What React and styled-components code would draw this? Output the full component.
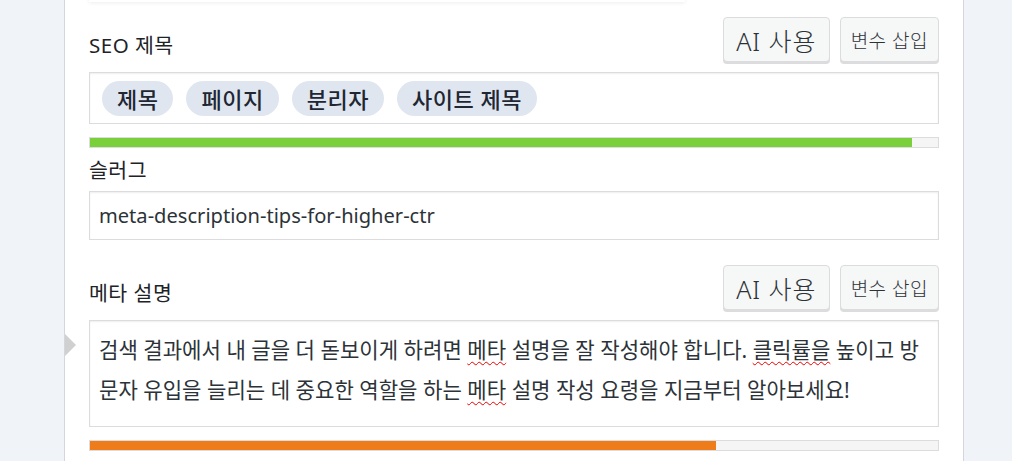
import React from 'react';
import styled, { createGlobalStyle } from 'styled-components';

const GlobalStyle = createGlobalStyle`
    html, body {
        margin: 0;
        padding: 0;
        background: #f0f3f8;
        font-family: "Noto Sans", "Noto Sans CJK KR", sans-serif;
        color: #2c3338;
    }
`;

const Panel = styled.div`
    width: 850px;
    min-height: 461px;
    margin-left: 64px;
    padding: 0 24px;
    background: #fff;
    border-left: 1px solid #d4d6da;
    border-right: 1px solid #d4d6da;
    overflow: hidden;
`;

const PrevCard = styled.div`
    width: 596px;
    height: 20px;
    margin-top: -18px;
    background: #fff;
    box-shadow: 0 1px 4px rgba(0, 0, 0, 0.07);
`;

const Field = styled.div`
    margin-top: ${props => props.gap}px;
    position: relative;
`;

const Header = styled.div`
    display: flex;
    align-items: flex-end;
    justify-content: space-between;
`;

const Label = styled.label`
    display: block;
    font-size: 20.5px;
    letter-spacing: 0.5px;
    line-height: 30px;
    color: #1d2327;
    margin-bottom: ${props => props.lift || 0}px;
`;

const Buttons = styled.div`
    display: flex;
    gap: 10px;
`;

const Button = styled.button`
    height: 45px;
    margin-bottom: 2px;
    padding: 0 ${props => (props.big ? 12 : 10)}px;
    font-family: "Noto Sans", "Noto Sans CJK KR", sans-serif;
    font-size: ${props => (props.big ? 25 : 19)}px;
    font-weight: 300;
    letter-spacing: ${props => (props.big ? 1 : 0.5)}px;
    color: #2c3338;
    background: #f6f7f7;
    border: 1px solid #dcdcde;
    border-radius: 4px;
    box-shadow: 0 2px 0 #dcdcde;
    cursor: pointer;
`;

const Box = styled.div`
    box-sizing: border-box;
    margin-top: 8px;
    border: 1px solid #dcdcde;
    box-shadow: inset 0 1px 2px rgba(0, 0, 0, 0.07);
    background: #fff;
`;

const ChipBox = styled(Box)`
    height: 52px;
    display: flex;
    align-items: center;
    gap: 13px;
    padding: 0 12px;
`;

const Chip = styled.span`
    height: 35px;
    display: flex;
    align-items: center;
    padding: 0 15px;
    border-radius: 18px;
    background: #e0e6ef;
    color: #1e2733;
    font-size: 22px;
    letter-spacing: 0.5px;
    font-weight: 500;
`;

const SlugInput = styled(Box)`
    margin-top: 6px;
    height: 49px;
    display: flex;
    align-items: center;
    padding: 0 9px;
    font-size: 20.1px;
`;

const TextArea = styled(Box)`
    height: 107px;
    padding: 9px 9px 0;
    font-size: 21.1px;
    line-height: 40px;
    word-break: break-all;
`;

const Misspelled = styled.span`
    text-decoration: underline wavy #e00;
    text-decoration-thickness: 1px;
    text-underline-offset: 3px;
`;

const Pointer = styled.div`
    position: absolute;
    left: -25px;
    top: 68px;
    width: 0;
    height: 0;
    border-left: 12px solid #d0d0d0;
    border-top: 12px solid transparent;
    border-bottom: 12px solid transparent;
`;

const Bar = styled.div`
    margin-top: 13px;
    height: 11px;
    box-sizing: border-box;
    border: 1px solid #dcdcde;
    background: #f5f5f5;
`;

const Fill = styled.div`
    height: 100%;
    background: ${props => props.color};
`;

const chips = ['제목', '페이지', '분리자', '사이트 제목'];

const App = () => {
    return (
        <>
            <GlobalStyle />
            <Panel>
                <PrevCard />

                <Field gap={15}>
                    <Header>
                        <Label lift={4}>SEO 제목</Label>
                        <Buttons>
                            <Button big>AI 사용</Button>
                            <Button>변수 삽입</Button>
                        </Buttons>
                    </Header>
                    <ChipBox>
                        {chips.map(chip => (
                            <Chip key={chip}>{chip}</Chip>
                        ))}
                    </ChipBox>
                    <Bar>
                        <Fill color="#7ad03a" style={{ width: '96.9%' }} />
                    </Bar>
                </Field>

                <Field gap={7}>
                    <Label>슬러그</Label>
                    <SlugInput>meta-description-tips-for-higher-ctr</SlugInput>
                </Field>

                <Field gap={25}>
                    <Header>
                        <Label lift={4}>메타 설명</Label>
                        <Buttons>
                            <Button big>AI 사용</Button>
                            <Button>변수 삽입</Button>
                        </Buttons>
                    </Header>
                    <Pointer />
                    <TextArea>
                        검색 결과에서 내 글을 더 돋보이게 하려면 <Misspelled>메타</Misspelled> 설명을 잘
                        작성해야 합니다. <Misspelled>클릭률을</Misspelled> 높이고 방문자 유입을 늘리는 데
                        중요한 역할을 하는 <Misspelled>메타</Misspelled> 설명 작성 요령을 지금부터
                        알아보세요!
                    </TextArea>
                    <Bar>
                        <Fill color="#ee7c1b" style={{ width: '73.8%' }} />
                    </Bar>
                </Field>
            </Panel>
        </>
    );
};

export default App;
